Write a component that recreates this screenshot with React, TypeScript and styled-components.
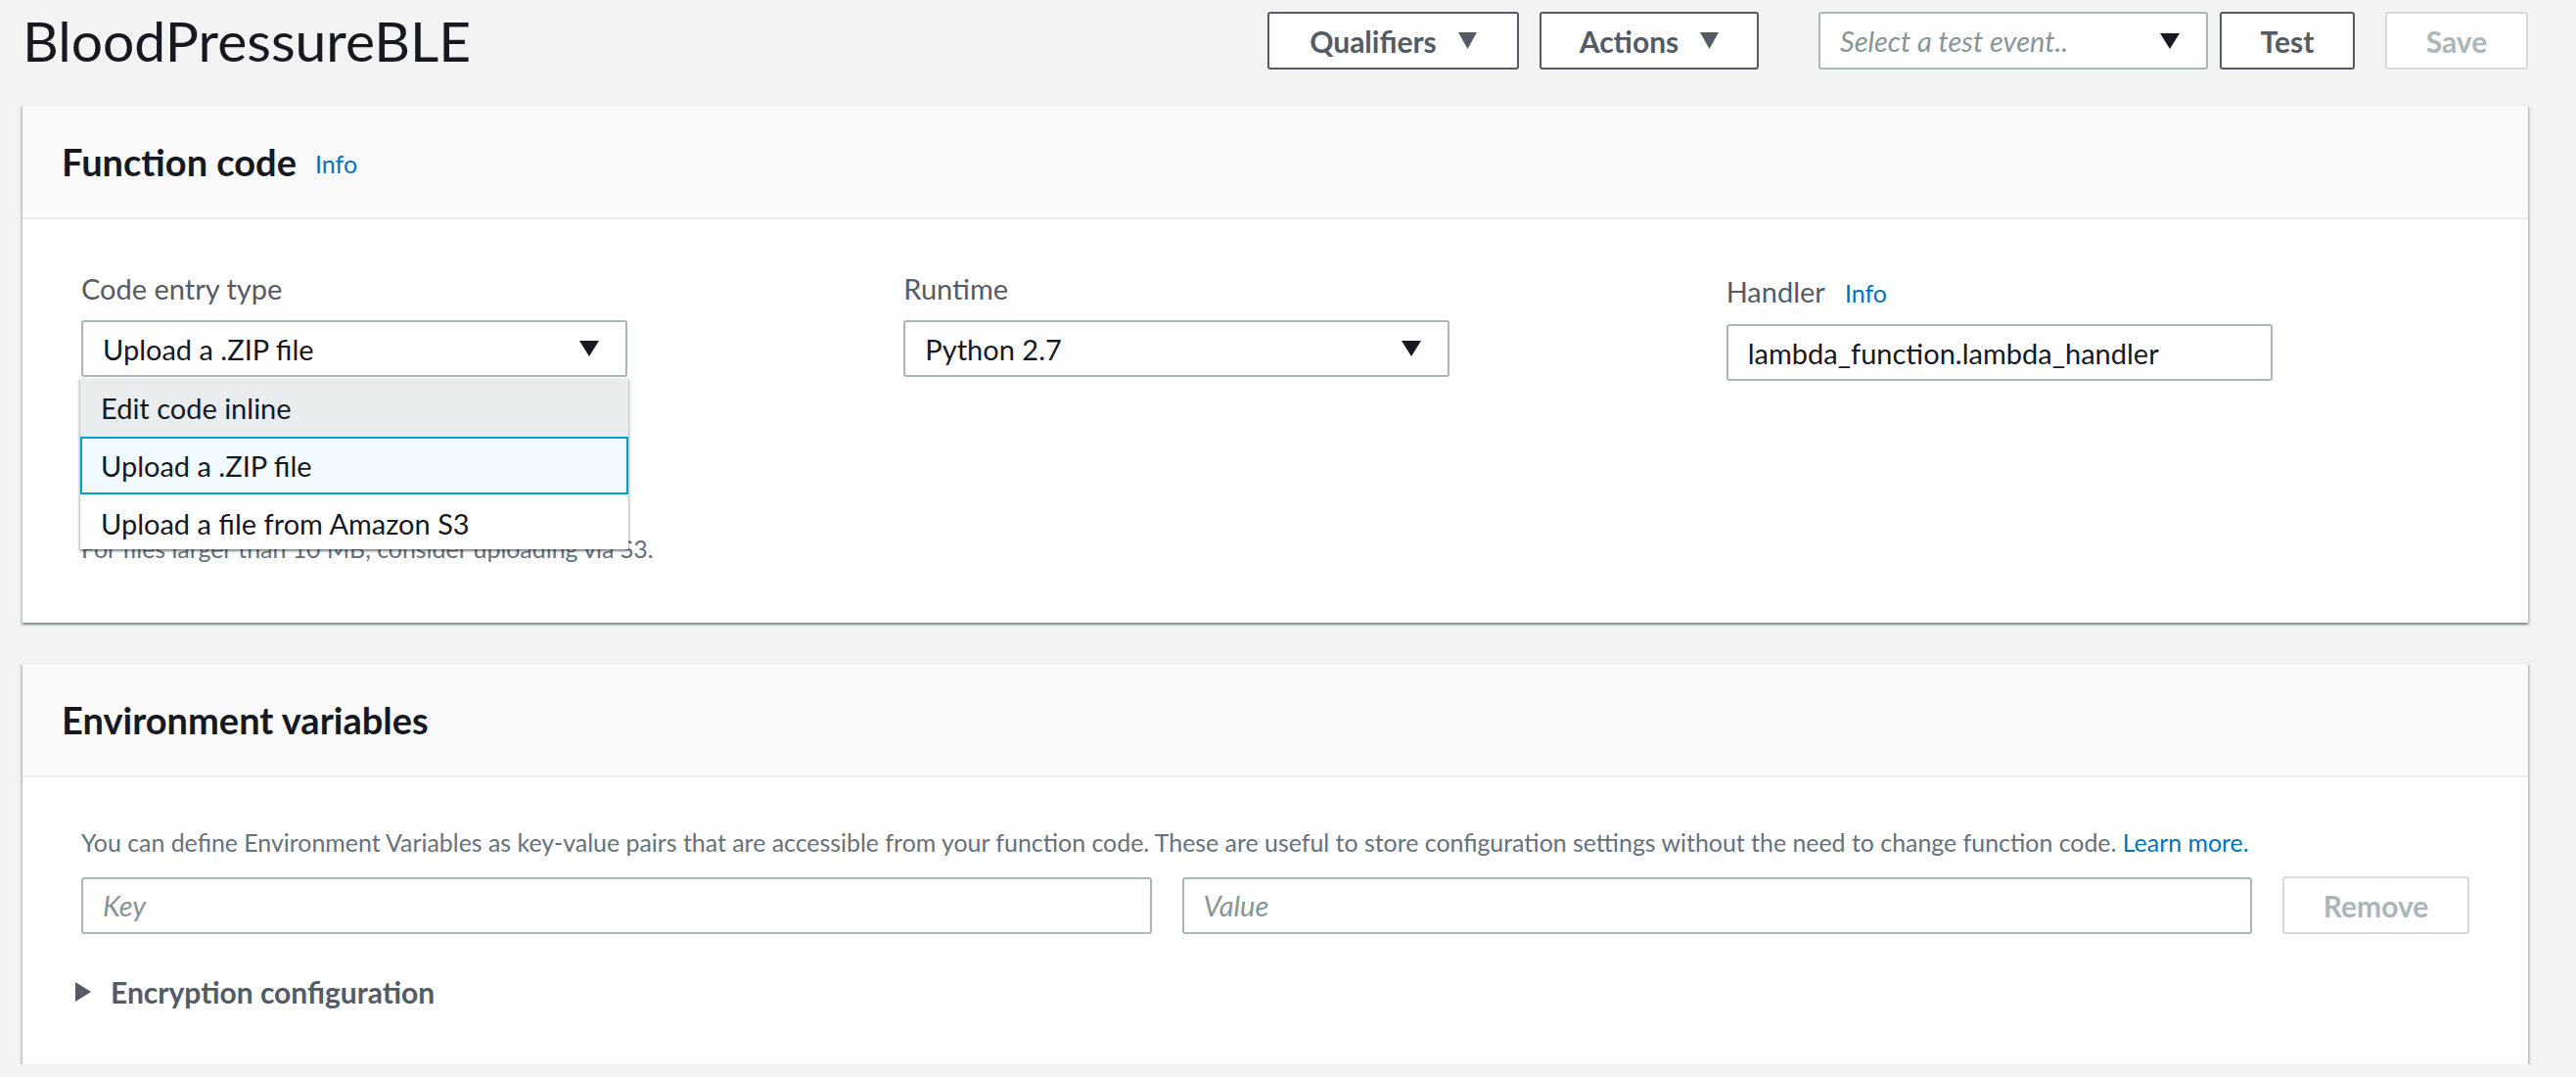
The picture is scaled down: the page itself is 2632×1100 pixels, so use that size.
import React from "react";
import styled, { createGlobalStyle } from "styled-components";

const GlobalStyle = createGlobalStyle`
  html, body {
    margin: 0;
    padding: 0;
    background: #f2f3f3;
    font-family: Lato, "Liberation Sans", Arial, sans-serif;
    color: #16191f;
  }
  * { box-sizing: border-box; }
`;

const Page = styled.div`
  padding: 12px 49px 0 23px;
`;

const TopBar = styled.header`
  display: flex;
  align-items: center;
  justify-content: space-between;
  height: 59px;
  margin-bottom: 36px;
`;

const Title = styled.h1`
  margin: 0;
  font-size: 57px;
  font-weight: 400;
  line-height: 59px;
  color: #16191f;
`;

const Toolbar = styled.div`
  display: flex;
  align-items: center;
`;

const ToolGroup = styled.div<{ $before?: number; $gap: number }>`
  display: flex;
  align-items: center;
  gap: ${(p) => p.$gap}px;
  margin-left: ${(p) => p.$before ?? 0}px;
`;

const Button = styled.button<{ $width: number; $disabled?: boolean }>`
  display: flex;
  align-items: center;
  justify-content: center;
  gap: 22px;
  width: ${(p) => p.$width}px;
  height: 59px;
  padding: 0;
  background: #fff;
  border: 2px solid ${(p) => (p.$disabled ? "#d5dbdb" : "#545b64")};
  border-radius: 3px;
  font-family: inherit;
  font-size: 30px;
  font-weight: 700;
  color: ${(p) => (p.$disabled ? "#aab7b8" : "#545b64")};
  cursor: pointer;
`;

const TestSelect = styled.div`
  display: flex;
  align-items: center;
  justify-content: space-between;
  width: 398px;
  height: 59px;
  padding: 0 27px 0 20px;
  background: #fff;
  border: 2px solid #aab7b8;
  border-radius: 3px;
`;

const Placeholder = styled.span`
  font-size: 29px;
  font-style: italic;
  color: #879596;
`;

const Panel = styled.section<{ $gapAfter?: number }>`
  background: #fff;
  border-top: 1px solid #eaeded;
  box-shadow: 0 2px 2px 0 rgba(0, 28, 36, 0.3), 2px 2px 2px 0 rgba(0, 28, 36, 0.15),
    -2px 2px 2px 0 rgba(0, 28, 36, 0.15);
  margin-bottom: ${(p) => p.$gapAfter ?? 0}px;
`;

const PanelHeader = styled.div`
  display: flex;
  align-items: center;
  gap: 19px;
  height: 116px;
  padding: 0 40px;
  background: #fafafa;
  border-bottom: 2px solid #eaeded;
`;

const PanelTitle = styled.h2`
  margin: 0;
  font-size: 38px;
  font-weight: 700;
  color: #16191f;
`;

const InfoLink = styled.a`
  font-size: 25px;
  color: #0073bb;
  text-decoration: none;
  padding-top: 4px;
`;

const PanelBody = styled.div<{ $top: number; $bottom: number }>`
  padding: ${(p) => p.$top}px 60px ${(p) => p.$bottom}px;
`;

const FieldGrid = styled.div`
  display: grid;
  grid-template-columns: repeat(3, 1fr);
  column-gap: 81px;
`;

const Field = styled.div`
  display: flex;
  flex-direction: column;
`;

const Label = styled.label`
  display: flex;
  align-items: baseline;
  gap: 20px;
  font-size: 29px;
  line-height: 40px;
  color: #545b64;
  margin-bottom: 12px;
`;

const SelectWrap = styled.div`
  position: relative;
  width: 558px;
`;

const SelectBox = styled.div`
  display: flex;
  align-items: center;
  justify-content: space-between;
  width: 558px;
  height: 58px;
  padding: 0 27px 0 20px;
  background: #fff;
  border: 2px solid #aab7b8;
  border-radius: 3px;
  font-size: 29px;
  color: #16191f;
`;

const TextInput = styled.div<{ $placeholder?: boolean; $width?: number }>`
  display: flex;
  align-items: center;
  ${(p) => (p.$width ? `width: ${p.$width}px;` : "flex: 1;")}
  height: 58px;
  padding: 0 20px;
  background: #fff;
  border: 2px solid #aab7b8;
  border-radius: 3px;
  font-size: 29px;
  color: ${(p) => (p.$placeholder ? "#879596" : "#16191f")};
  font-style: ${(p) => (p.$placeholder ? "italic" : "normal")};
`;

const Menu = styled.ul`
  position: absolute;
  top: calc(100% + 1px);
  left: -1px;
  right: -1px;
  z-index: 10;
  margin: 0;
  padding: 0;
  list-style: none;
  height: 175px;
  overflow: hidden;
  background: #fff;
  box-shadow: 0 2px 2px 0 rgba(0, 28, 36, 0.3), 2px 2px 2px 0 rgba(0, 28, 36, 0.15),
    -2px 2px 2px 0 rgba(0, 28, 36, 0.15);
`;

const MenuItem = styled.li<{ $state?: "hover" | "selected" }>`
  display: flex;
  align-items: center;
  height: ${(p) => (p.$state === "hover" ? 60 : 59)}px;
  padding-left: ${(p) => (p.$state === "selected" ? 19 : 21)}px;
  font-size: 29px;
  color: #16191f;
  background: ${(p) =>
    p.$state === "hover" ? "#eaeded" : p.$state === "selected" ? "#f1faff" : "#fff"};
  border: ${(p) => (p.$state === "selected" ? "2px solid #00a1c9" : "none")};
`;

const HelpText = styled.p<{ $top?: number }>`
  margin: ${(p) => p.$top ?? 0}px 0 0;
  font-size: 24.9px;
  line-height: 32px;
  color: #687078;
`;

const Link = styled.a`
  color: #0073bb;
  text-decoration: none;
`;

const EnvRow = styled.div`
  display: flex;
  align-items: center;
  gap: 31px;
  margin-top: 19px;
`;

const Expander = styled.div`
  display: flex;
  align-items: center;
  gap: 20px;
  margin: 41px 0 0 -6px;
  height: 36px;
  font-size: 30px;
  font-weight: 700;
  color: #545b64;
`;

const Caret = ({ color, w = 20, h = 16 }: { color: string; w?: number; h?: number }) => (
  <svg width={w} height={h} viewBox={`0 0 ${w} ${h}`} aria-hidden>
    <polygon points={`0,0 ${w},0 ${w / 2},${h}`} fill={color} />
  </svg>
);

const RightCaret = () => (
  <svg width={16} height={20} viewBox="0 0 16 20" aria-hidden>
    <polygon points="0,0 16,10 0,20" fill="#545b64" />
  </svg>
);

export default function App() {
  return (
    <>
      <GlobalStyle />
      <Page>
        <TopBar>
          <Title>BloodPressureBLE</Title>
          <Toolbar>
            <ToolGroup $gap={21}>
              <Button $width={257}>
                Qualifiers <Caret color="#545b64" w={19} h={17} />
              </Button>
              <Button $width={224}>
                Actions <Caret color="#545b64" w={19} h={17} />
              </Button>
            </ToolGroup>
            <ToolGroup $gap={12} $before={61}>
              <TestSelect>
                <Placeholder>Select a test event..</Placeholder>
                <Caret color="#16191f" />
              </TestSelect>
              <Button $width={138}>Test</Button>
            </ToolGroup>
            <ToolGroup $gap={0} $before={31}>
              <Button $width={146} $disabled>
                Save
              </Button>
            </ToolGroup>
          </Toolbar>
        </TopBar>

        <Panel $gapAfter={41}>
          <PanelHeader>
            <PanelTitle>Function code</PanelTitle>
            <InfoLink>Info</InfoLink>
          </PanelHeader>
          <PanelBody $top={51} $bottom={60}>
            <FieldGrid>
              <Field>
                <Label>Code entry type</Label>
                <SelectWrap>
                  <SelectBox>
                    <span>Upload a .ZIP file</span>
                    <Caret color="#16191f" />
                  </SelectBox>
                  <Menu>
                    <MenuItem $state="hover">Edit code inline</MenuItem>
                    <MenuItem $state="selected">Upload a .ZIP file</MenuItem>
                    <MenuItem>Upload a file from Amazon S3</MenuItem>
                  </Menu>
                </SelectWrap>
                <HelpText $top={159}>For files larger than 10 MB, consider uploading via S3.</HelpText>
              </Field>
              <Field>
                <Label>Runtime</Label>
                <SelectBox>
                  <span>Python 2.7</span>
                  <Caret color="#16191f" />
                </SelectBox>
              </Field>
              <Field>
                <Label>
                  Handler <InfoLink>Info</InfoLink>
                </Label>
                <TextInput $width={558}>lambda_function.lambda_handler</TextInput>
              </Field>
            </FieldGrid>
          </PanelBody>
        </Panel>

        <Panel>
          <PanelHeader>
            <PanelTitle>Environment variables</PanelTitle>
          </PanelHeader>
          <PanelBody $top={50} $bottom={56}>
            <HelpText>
              You can define Environment Variables as key-value pairs that are accessible from your
              function code. These are useful to store configuration settings without the need to
              change function code. <Link>Learn more.</Link>
            </HelpText>
            <EnvRow>
              <TextInput $placeholder>Key</TextInput>
              <TextInput $placeholder>Value</TextInput>
              <Button $width={191} $disabled>
                Remove
              </Button>
            </EnvRow>
            <Expander>
              <RightCaret />
              Encryption configuration
            </Expander>
          </PanelBody>
        </Panel>
      </Page>
    </>
  );
}
